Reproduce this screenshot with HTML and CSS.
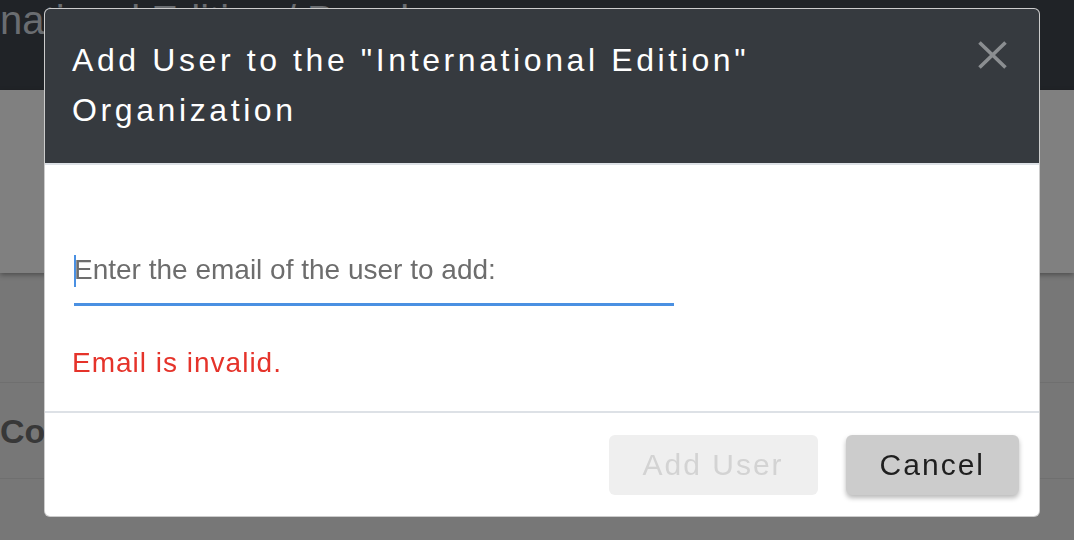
FILE: index.html
```html
<!DOCTYPE html>
<html lang="en">
<head>
<meta charset="utf-8">
<title>Add User</title>
<link rel="stylesheet" href="styles.css">
</head>
<body>
<div class="page">
  <header class="topbar"><span class="crumb">International Edition / Panel</span></header>
  <section class="panel"></section>
  <div class="rows">
    <div class="row row-a"></div>
    <div class="row row-b"><span class="row-title">Content</span></div>
    <div class="row row-c"></div>
  </div>
</div>
<div class="overlay">
  <div class="modal">
    <div class="modal-header">
      <h1 class="modal-title">Add User to the "International Edition" Organization</h1>
      <button class="close" type="button" aria-label="Close">
        <svg width="29" height="28" viewBox="0 0 29 28"><path d="M1.5 1.5 L27.5 26.5 M27.5 1.5 L1.5 26.5" stroke="#8b8e91" stroke-width="3.6" stroke-linecap="butt" fill="none"/></svg>
      </button>
    </div>
    <div class="modal-body">
      <div class="field">
        <input class="email" type="text" placeholder="Enter the email of the user to add:">
      </div>
      <p class="error">Email is invalid.</p>
    </div>
    <div class="modal-footer">
      <button class="btn btn-disabled" type="button">Add User</button>
      <button class="btn btn-cancel" type="button">Cancel</button>
    </div>
  </div>
</div>
</body>
</html>
```
FILE: styles.css
```css
html, body {
  margin: 0;
  padding: 0;
}
body {
  width: 1074px;
  height: 540px;
  overflow: hidden;
  font-family: "Liberation Sans", Arial, sans-serif;
  background: #777777;
}
.page {
  display: flex;
  flex-direction: column;
  height: 540px;
}
.topbar {
  height: 90px;
  background: #202327;
  overflow: hidden;
  white-space: nowrap;
}
.crumb {
  display: block;
  margin-left: -80px;
  font-size: 40px;
  line-height: 40px;
  color: #6a6d71;
}
.panel {
  height: 183px;
  background: #808080;
  box-shadow: 0 2px 5px rgba(0, 0, 0, 0.35);
  position: relative;
  z-index: 1;
}
.rows {
  flex: 1;
  display: flex;
  flex-direction: column;
  background: #777777;
}
.row-a {
  height: 109px;
  border-bottom: 1px solid #6f6f6f;
}
.row-b {
  height: 96px;
  border-bottom: 1px solid #6f6f6f;
  padding-top: 31px;
  box-sizing: border-box;
}
.row-title {
  font-size: 34px;
  line-height: 34px;
  font-weight: bold;
  color: #383838;
}
.overlay {
  position: fixed;
  inset: 0;
  z-index: 10;
}
.modal {
  box-sizing: border-box;
  width: 996px;
  margin: 8px 0 0 44px;
  background: #ffffff;
  border: 1px solid rgba(0, 0, 0, 0.2);
  border-radius: 6px;
  overflow: hidden;
}
.modal-header {
  display: flex;
  justify-content: space-between;
  align-items: flex-start;
  background: #363a3f;
  padding: 26px 28px 28px 27px;
  border-bottom: 2px solid #dde1e6;
}
.modal-title {
  margin: 0;
  max-width: 780px;
  font-size: 32px;
  line-height: 50px;
  font-weight: normal;
  letter-spacing: 3.6px;
  color: #ffffff;
}
.close {
  margin: 6px 4px 0 0;
  padding: 0;
  border: 0;
  background: transparent;
  width: 29px;
  height: 28px;
  display: block;
}
.close svg {
  display: block;
}
.modal-body {
  padding: 89px 29px 32px 29px;
  border-bottom: 2px solid #dde1e6;
}
.field {
  position: relative;
  width: 600px;
}
.field::before {
  content: "";
  position: absolute;
  left: 0;
  top: 1px;
  width: 2px;
  height: 32px;
  background: #4a90e2;
}
.email {
  display: block;
  box-sizing: content-box;
  width: 600px;
  height: 32px;
  margin: 0;
  padding: 0 0 17px 0;
  border: 0;
  border-bottom: 3px solid #4a90e2;
  outline: none;
  background: transparent;
  font-family: "Liberation Sans", Arial, sans-serif;
  font-size: 28px;
  line-height: 32px;
  color: #333333;
}
.email::placeholder {
  color: #6d6d6d;
  opacity: 1;
}
.error {
  margin: 41px 0 0 -2px;
  font-size: 28px;
  line-height: 32px;
  letter-spacing: 1px;
  color: #e5332a;
}
.modal-footer {
  display: flex;
  justify-content: flex-end;
  gap: 28px;
  padding: 22px 20px 21px 20px;
}
.btn {
  height: 60px;
  padding: 0 34px;
  border: 0;
  border-radius: 6px;
  font-family: "Liberation Sans", Arial, sans-serif;
  font-size: 30px;
  letter-spacing: 2px;
  line-height: 60px;
}
.btn-disabled {
  background: #efefef;
  color: #d3d3d3;
}
.btn-cancel {
  background: #cccccc;
  color: #1f1f1f;
  box-shadow: 0 3px 5px rgba(0, 0, 0, 0.28);
}
```
